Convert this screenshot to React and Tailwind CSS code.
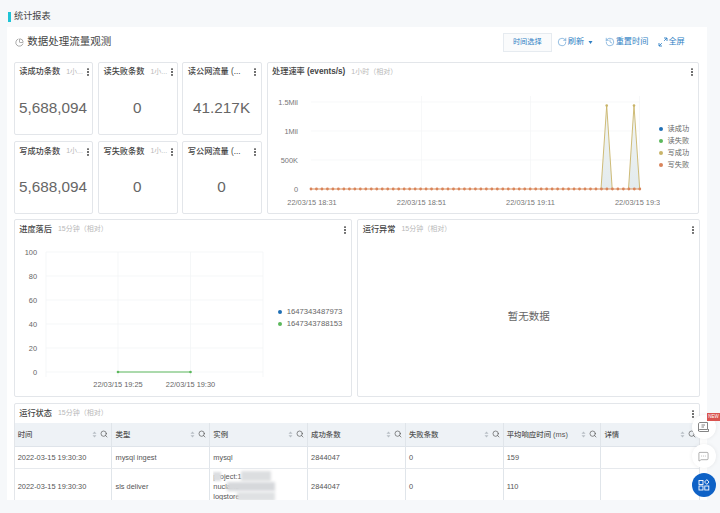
import React from "react";
import { Search, RotateCw, History, PieChart, MoreVertical, MessageSquareMore } from "lucide-react";

const font = { fontFamily: '"Liberation Sans", "Noto Sans CJK SC", sans-serif' };

// 指标卡
const statCards = [
  { title: "读成功条数", value: "5,688,094", time: "1小..." },
  { title: "读失败条数", value: "0", time: "1小..." },
  { title: "读公网流量 (...", value: "41.217K" },
  { title: "写成功条数", value: "5,688,094", time: "1小..." },
  { title: "写失败条数", value: "0", time: "1小..." },
  { title: "写公网流量 (...", value: "0" },
];

const columns = ["时间", "类型", "实例", "成功条数", "失败条数", "平均响应时间 (ms)", "详情"];

const Kebab = () => <MoreVertical size={10} strokeWidth={2.5} className="shrink-0 text-[#333] -mr-[3px]" />;

const CardHead = ({ title, time }) => (
  <div className="flex items-center h-[19px] pl-[4.5px] pr-[4px] shrink-0">
    <span className="text-[8.2px] font-medium text-[#444] whitespace-nowrap">{title}</span>
    {time && <span className="ml-[6px] text-[7px] text-[#b8b8b8] whitespace-nowrap">{time}</span>}
    <span className="flex-1" />
    <Kebab />
  </div>
);

const StatCard = ({ title, value, time }) => (
  <div className="bg-white border border-[#e3e6ea] rounded-[2px] flex flex-col h-[73px]">
    <CardHead title={title} time={time} />
    <div className="flex-1 flex items-center justify-center pt-[1px] pr-[1px] text-[15.3px] text-[#666]">{value}</div>
  </div>
);

const Legend = ({ items, className, textSize }) => (
  <div className={`flex flex-col justify-center gap-[3.5px] ${className}`}>
    {items.map((it) => (
      <div key={it.label} className={`flex items-center gap-[5px] leading-[8.5px] text-[#666] whitespace-nowrap ${textSize}`}>
        <span className="w-[4px] h-[4px] rounded-full" style={{ background: it.color }} />
        {it.label}
      </div>
    ))}
  </div>
);

const RateChart = () => {
  const base = 107;
  const xs = Array.from({ length: 61 }, (_, i) => 43 + i * 5.48);
  return (
    <svg width="392" height="129" className="shrink-0 -mt-[1px]">
      <defs>
        <linearGradient id="spike" x1="0" x2="0" y1="0" y2="1">
          <stop offset="0" stopColor="#f2f5f4" />
          <stop offset="1" stopColor="#e3ebed" />
        </linearGradient>
      </defs>
      {[20, 49, 78].map((y) => (
        <line key={y} x1="43" x2="372" y1={y} y2={y} stroke="#f4f5f7" strokeWidth="0.7" />
      ))}
      {[153.5, 262.5, 371.5].map((x) => (
        <line key={x} x1={x} x2={x} y1="14" y2={base} stroke="#f4f5f7" strokeWidth="0.7" />
      ))}
      <g fontSize="7.4" fill="#777" textAnchor="end" fontFamily="Liberation Sans">
        <text x="30" y="22.5">1.5Mil</text>
        <text x="30" y="51.5">1Mil</text>
        <text x="30" y="80.5">500K</text>
        <text x="30" y="109.5">0</text>
      </g>
      <g fontSize="7.4" fill="#777" textAnchor="middle" fontFamily="Liberation Sans">
        <text x="44" y="123">22/03/15 18:31</text>
        <text x="153.5" y="123">22/03/15 18:51</text>
        <text x="262.5" y="123">22/03/15 19:11</text>
      </g>
      <text x="347" y="123" fontSize="7.4" fill="#777" fontFamily="Liberation Sans">22/03/15 19:3</text>
      <path d="M333 107L338.7 23.5L344.2 107Z M360.5 107L366 23.5L371.7 107Z" fill="url(#spike)" />
      <path d="M333 107L338.7 23.5L344.2 107 M360.5 107L366 23.5L371.7 107" fill="none" stroke="#c9b469" strokeWidth="0.9" />
      <circle cx="338.7" cy="23.5" r="1.3" fill="#c9b469" />
      <circle cx="366" cy="23.5" r="1.3" fill="#c9b469" />
      <line x1="43" x2="372" y1={base} y2={base} stroke="#d9905f" strokeWidth="1.2" />
      {xs.map((x) => (
        <circle key={x} cx={x} cy={base} r="1.4" fill="#d9845a" />
      ))}
    </svg>
  );
};

const LagChart = () => {
  const ticks = [100, 80, 60, 40, 20, 0];
  return (
    <svg width="258" height="155" className="shrink-0">
      {ticks.map((t, i) => (
        <g key={t}>
          <line x1="31" x2="248" y1={13 + i * 24} y2={13 + i * 24} stroke="#f1f3f5" strokeWidth="0.7" />
          <text x="22" y={16 + i * 24} fontSize="7.4" fill="#666" textAnchor="end" fontFamily="Liberation Sans">{t}</text>
        </g>
      ))}
      {[31, 103, 175.5, 248].map((x) => (
        <line key={x} x1={x} x2={x} y1="13" y2="138" stroke="#f1f3f5" strokeWidth="0.7" />
      ))}
      <g fontSize="7.4" fill="#666" textAnchor="middle" fontFamily="Liberation Sans">
        <text x="103" y="148">22/03/15 19:25</text>
        <text x="175.5" y="148">22/03/15 19:30</text>
      </g>
      <line x1="103" x2="175.5" y1="133" y2="133" stroke="#5cb85c" strokeWidth="1" />
      <circle cx="103" cy="133" r="1.3" fill="#5cb85c" />
      <circle cx="175.5" cy="133" r="1.3" fill="#5cb85c" />
    </svg>
  );
};

const SortIcon = () => (
  <svg width="5" height="7" viewBox="0 0 5 7" className="shrink-0">
    <path d="M2.5 0.5L4.5 2.7H0.5Z M2.5 6.5L4.5 4.3H0.5Z" fill="#b8bec5" />
  </svg>
);

const FullscreenIcon = () => (
  <svg width="10" height="10" viewBox="0 0 10 10" fill="none" stroke="#2f7fc4" strokeWidth="0.9" className="mr-[0.5px]">
    <path d="M6 1H9V4M9 1L6.2 3.8" />
    <path d="M1 6V9H4M1 9L3.8 6.2" />
  </svg>
);

const Cell = ({ children, className = "" }) => (
  <div className={`px-[3px] flex items-center text-[7.4px] text-[#555] border-r border-[#e0e5ea] last:border-r-0 min-w-0 ${className}`}>
    {children}
  </div>
);

// 打码的实例内容
const BlurredInstance = () => (
  <div className="relative leading-[10px] whitespace-nowrap overflow-hidden w-full h-full pt-[3px]">
    <div>project:1</div>
    <div>nuclane</div>
    <div>logstore</div>
    <div className="absolute left-0 top-[3px] w-[8px] h-[9px] bg-[#dcdee1] blur-[1px]" />
    <div className="absolute left-[28px] top-[2px] w-[30px] h-[10px] bg-[#dcdee0] blur-[1.5px]" />
    <div className="absolute left-[14px] top-[13px] w-[48px] h-[9px] bg-[#d6d8db] blur-[1.5px]" />
    <div className="absolute left-[24px] top-[23px] w-[38px] h-[9px] bg-[#dfe1e3] blur-[1.5px]" />
  </div>
);

const rowGrid = "grid grid-cols-[97.8px_97.8px_97.8px_97.8px_97.8px_97.8px_98px]";

const App = () => (
  <div style={font} className="relative w-[720px] h-[513px] overflow-hidden bg-[#f6f8fa]">
    <div className="h-[27px] flex items-center pl-[8px] pt-[6px]">
      <span className="w-[2.5px] h-[10px] bg-[#1fc4d6] mr-[3.5px]" />
      <span className="text-[9.2px] text-[#444]">统计报表</span>
    </div>

    <div className="ml-[7px] w-[699.5px] h-[473px] bg-white px-[6.7px] overflow-hidden">
      <div className="h-[34.5px] flex items-center pb-[4px]">
        <PieChart size={9} className="text-[#555] ml-[1.5px] mr-[3px]" strokeWidth={1.3} />
        <span className="text-[10.5px] text-[#444]">数据处理流量观测</span>
        <span className="flex-1" />
        <div className="flex items-center text-[#2f7fc4] text-[8.2px] pr-[15px]">
          <button className="w-[49px] h-[19px] border border-[#e6ebf0] bg-[#fafbfc] text-[7.2px] text-[#2f7fc4] mr-[5.5px]">时间选择</button>
          <RotateCw size={10} strokeWidth={1.2} className="mr-[0.5px]" />
          <span>刷新</span>
          <svg width="5" height="3" viewBox="0 0 5 3" className="ml-[4px] mr-[12px]"><path d="M0.5 0L4.5 0L2.5 3Z" fill="#2f7fc4" /></svg>
          <History size={10} strokeWidth={1.2} className="mr-[0.5px]" />
          <span className="mr-[9.5px]">重置时间</span>
          <FullscreenIcon />
          <span>全屏</span>
        </div>
      </div>

      <div className="grid grid-cols-[79.7px_79.7px_79.7px_432.5px] gap-x-[4.6px] gap-y-[6.7px] w-[686px]">
        {statCards.slice(0, 3).map((c) => (
          <StatCard key={c.title} {...c} />
        ))}
        <div className="row-span-2 col-start-4 row-start-1 bg-white border border-[#e3e6ea] rounded-[2px] flex flex-col">
          <CardHead title={<>处理速率 <span className="font-bold">(events/s)</span></>} time="1小时（相对）" />
          <div className="flex-1 flex items-center">
            <RateChart />
            <Legend
              className="ml-[-1px]"
              textSize="text-[7.2px]"
              items={[
                { label: "读成功", color: "#1f6fb5" },
                { label: "读失败", color: "#5cb85c" },
                { label: "写成功", color: "#c9b469" },
                { label: "写失败", color: "#d9845a" },
              ]}
            />
          </div>
        </div>
        {statCards.slice(3).map((c) => (
          <StatCard key={c.title} {...c} />
        ))}
      </div>

      <div className="grid grid-cols-[338.5px_343px] gap-x-[5px] mt-[5px] w-[687px]">
        <div className="h-[178px] border border-[#e3e6ea] rounded-[2px] flex flex-col">
          <CardHead title="进度落后" time="15分钟（相对）" />
          <div className="flex-1 flex items-start">
            <LagChart />
            <Legend
              className="ml-[5px] mt-[69px]"
              textSize="text-[7.7px]"
              items={[
                { label: "1647343487973", color: "#1f6fb5" },
                { label: "1647343788153", color: "#5cb85c" },
              ]}
            />
          </div>
        </div>
        <div className="h-[178px] border border-[#e3e6ea] rounded-[2px] flex flex-col">
          <CardHead title="运行异常" time="15分钟（相对）" />
          <div className="flex-1 flex items-center justify-center pb-[2px] text-[10.5px] text-[#666]">暂无数据</div>
        </div>
      </div>

      <div className="mt-[6px] w-[686px] border border-[#e3e6ea] rounded-[2px]">
        <CardHead title="运行状态" time="15分钟（相对）" />
        <div className={`${rowGrid} h-[23.5px] bg-[#eef2f6] border-b border-[#dfe4ea]`}>
          {columns.map((c) => (
            <Cell key={c} className="gap-[3px] font-medium text-[7.1px]">
              <span className="flex-1 whitespace-nowrap">{c}</span>
              <SortIcon />
              <Search size={8} className="text-[#555] shrink-0" />
            </Cell>
          ))}
        </div>
        <div className={`${rowGrid} h-[22px] border-b border-[#e6e9ed]`}>
          <Cell>2022-03-15 19:30:30</Cell>
          <Cell>mysql ingest</Cell>
          <Cell>mysql</Cell>
          <Cell>2844047</Cell>
          <Cell>0</Cell>
          <Cell>159</Cell>
          <Cell />
        </div>
        <div className={`${rowGrid} h-[36px]`}>
          <Cell>2022-03-15 19:30:30</Cell>
          <Cell>sls deliver</Cell>
          <Cell><BlurredInstance /></Cell>
          <Cell>2844047</Cell>
          <Cell>0</Cell>
          <Cell>110</Cell>
          <Cell />
        </div>
      </div>
    </div>

    {/* 右下角悬浮按钮 */}
    <div className="absolute left-[691.5px] top-[415px] w-[24px] h-[24px] rounded-full bg-white shadow-[0_0_4px_rgba(0,0,0,0.08)] flex items-center justify-center">
      <svg width="11" height="10" viewBox="0 0 11 10" fill="none" stroke="#666" strokeWidth="0.8">
        <path d="M2 0.5H9.5V7.5H2C1.2 7.5 0.5 8 0.5 8.8V2C0.5 1.2 1.2 0.5 2 0.5Z" />
        <path d="M0.5 8.8C0.5 9.2 1 9.5 2 9.5H10.5V7" />
        <path d="M3.5 3H7M3.5 5H6" />
      </svg>
    </div>
    <div className="absolute left-[707px] top-[413px] w-[13px] h-[8px] bg-[#d9534f] text-white text-[4.5px] leading-[8px] text-center">NEW</div>
    <div className="absolute left-[691.5px] top-[444px] w-[24px] h-[24px] rounded-full bg-white shadow-[0_0_4px_rgba(0,0,0,0.08)] flex items-center justify-center text-[#666]">
      <MessageSquareMore size={11} strokeWidth={1.1} />
    </div>
    <div className="absolute left-[691.5px] top-[473px] w-[24px] h-[24px] rounded-full bg-[#0f62c6] flex items-center justify-center">
      <svg width="12" height="12" viewBox="0 0 12 12" fill="none" stroke="#fff" strokeWidth="0.9">
        <rect x="1" y="1.5" width="4" height="4" />
        <rect x="1" y="7" width="4" height="4" />
        <rect x="6.8" y="7" width="4" height="4" />
        <path d="M8.8 0.6L11 3L8.8 5.4L6.6 3Z" />
      </svg>
    </div>
  </div>
);

export default App;
